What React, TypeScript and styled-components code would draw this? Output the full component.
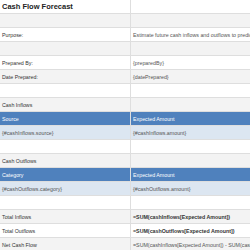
import styled, { createGlobalStyle } from 'styled-components';

const GlobalStyle = createGlobalStyle`
  html, body {
    margin: 0;
    padding: 0;
    background: #fff;
    overflow: hidden;
  }
  body {
    font-family: 'Liberation Sans', Arial, sans-serif;
  }
`;

type Tone = 'plain' | 'stripe' | 'header' | 'data';

const Sheet = styled.div`
  width: 250px;
  height: 250px;
  overflow: hidden;
`;

const Grid = styled.div`
  width: 420px;
  display: flex;
  flex-direction: column;
`;

const backgrounds: Record<Tone, string> = {
  plain: '#ffffff',
  stripe: '#f3f3f3',
  header: '#4f81bd',
  data: '#dce6f1',
};

const Row = styled.div<{ $tone: Tone }>`
  display: grid;
  grid-template-columns: 130px 1fr;
  height: 14px;
  box-sizing: border-box;
  border-bottom: 1px solid #dedede;
  background: ${props => backgrounds[props.$tone]};
  color: ${props => (props.$tone === 'header' ? '#ffffff' : '#333333')};
`;

const Cell = styled.div<{ $bold?: boolean; $muted?: boolean }>`
  display: flex;
  align-items: center;
  padding-left: 2px;
  font-size: 5.3px;
  white-space: nowrap;
  overflow: hidden;
  font-weight: ${props => (props.$bold ? 'bold' : 'normal')};
  color: ${props => (props.$muted ? '#555555' : 'inherit')};
  & + & {
    border-left: 1px solid #dedede;
  }
`;

const Title = styled(Cell)`
  font-size: 7.5px;
  font-weight: bold;
  color: #222222;
`;

interface Line {
  tone: Tone;
  label?: string;
  value?: string;
  bold?: boolean;
  muted?: boolean;
}

const lines: Line[] = [
  { tone: 'stripe' },
  { tone: 'plain', label: 'Purpose:', value: 'Estimate future cash inflows and outflows to predict liquidity', muted: true },
  { tone: 'stripe' },
  { tone: 'plain', label: 'Prepared By:', value: '{preparedBy}', muted: true },
  { tone: 'stripe', label: 'Date Prepared:', value: '{datePrepared}', muted: true },
  { tone: 'plain' },
  { tone: 'stripe', label: 'Cash Inflows' },
  { tone: 'header', label: 'Source', value: 'Expected Amount' },
  { tone: 'data', label: '{#cashInflows.source}', value: '{#cashInflows.amount}', muted: true },
  { tone: 'plain' },
  { tone: 'stripe', label: 'Cash Outflows' },
  { tone: 'header', label: 'Category', value: 'Expected Amount' },
  { tone: 'data', label: '{#cashOutflows.category}', value: '{#cashOutflows.amount}', muted: true },
  { tone: 'plain' },
  { tone: 'stripe', label: 'Total Inflows', value: '=SUM(cashInflows[Expected Amount])', bold: true },
  { tone: 'plain', label: 'Total Outflows', value: '=SUM(cashOutflows[Expected Amount])', bold: true },
  { tone: 'stripe', label: 'Net Cash Flow', value: '=SUM(cashInflows[Expected Amount]) - SUM(cashOutflows[Expected Amount])', muted: true },
];

export default function App() {
  return (
    <Sheet>
      <GlobalStyle />
      <Grid>
        <Row $tone="plain">
          <Title>Cash Flow Forecast</Title>
          <Cell />
        </Row>
        {lines.map((line, i) => (
          <Row key={i} $tone={line.tone}>
            <Cell $muted={line.tone === 'data'}>{line.label}</Cell>
            <Cell $bold={line.bold} $muted={line.muted || line.tone === 'data'}>
              {line.value}
            </Cell>
          </Row>
        ))}
      </Grid>
    </Sheet>
  );
}
